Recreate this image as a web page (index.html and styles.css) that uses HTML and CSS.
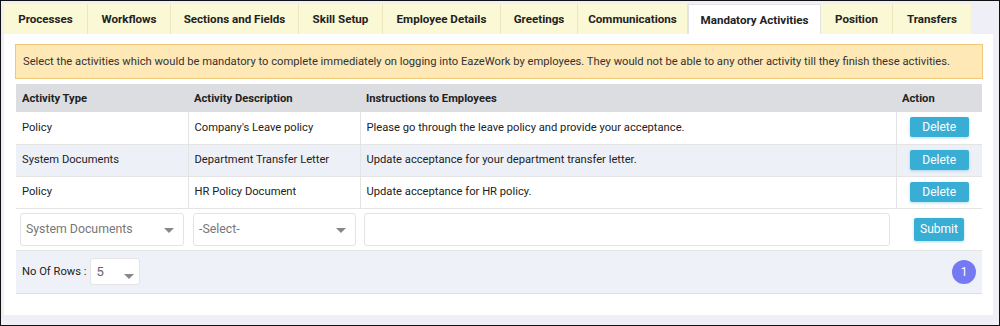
FILE: index.html
```html
<!DOCTYPE html>
<html lang="en">

<head>
    <meta charset="UTF-8">
    <meta name="viewport" content="width=device-width, initial-scale=1.0">
    <title>Mandatory Activities</title>
    <link rel="stylesheet" href="styles.css">
</head>

<body>
    <div class="frame">
        <div class="abas">
            <div class="aba">Processes</div>
            <div class="aba">Workflows</div>
            <div class="aba">Sections and Fields</div>
            <div class="aba">Skill Setup</div>
            <div class="aba">Employee Details</div>
            <div class="aba">Greetings</div>
            <div class="aba">Communications</div>
            <div class="aba ativa">Mandatory Activities</div>
            <div class="aba">Position</div>
            <div class="aba">Transfers</div>
        </div>
        <div class="cartao">
            <div class="aviso">Select the activities which would be mandatory to complete immediately on logging into EazeWork by employees. They would not be able to any other activity till they finish these activities.</div>
            <table class="tabela">
                <thead>
                    <tr>
                        <th class="c1">Activity Type</th>
                        <th class="c2">Activity Description</th>
                        <th class="c3">Instructions to Employees</th>
                        <th class="c4">Action</th>
                    </tr>
                </thead>
                <tbody>
                    <tr>
                        <td>Policy</td>
                        <td>Company's Leave policy</td>
                        <td>Please go through the leave policy and provide your acceptance.</td>
                        <td class="acao"><span class="botao">Delete</span></td>
                    </tr>
                    <tr class="alt">
                        <td>System Documents</td>
                        <td>Department Transfer Letter</td>
                        <td>Update acceptance for your department transfer letter.</td>
                        <td class="acao"><span class="botao">Delete</span></td>
                    </tr>
                    <tr>
                        <td>Policy</td>
                        <td>HR Policy Document</td>
                        <td>Update acceptance for HR policy.</td>
                        <td class="acao"><span class="botao">Delete</span></td>
                    </tr>
                    <tr class="form">
                        <td><div class="campo">System Documents<span class="seta"></span></div></td>
                        <td><div class="campo">-Select-<span class="seta"></span></div></td>
                        <td><div class="campo texto"></div></td>
                        <td class="acao"><span class="botao submit">Submit</span></td>
                    </tr>
                </tbody>
            </table>
            <div class="rodape">
                <div class="linhas">No Of Rows :
                    <div class="campo pequeno">5<span class="seta"></span></div>
                </div>
                <div class="pagina">1</div>
            </div>
        </div>
    </div>
</body>

</html>
```

FILE: styles.css
```css
* {
    box-sizing: border-box;
}

body {
    margin: 0;
    background-color: #ffffff;
    font-family: Roboto, "Liberation Sans", sans-serif;
    color: #222;
}

.frame {
    width: 1000px;
    height: 326px;
    border: 1px solid #111;
    background-color: #eff0f7;
    padding: 3px 6px 0 3px;
    overflow: hidden;
}

.abas {
    display: flex;
    height: 30px;
}

.aba {
    background-color: #fbf8d6;
    border-right: 1px solid #ece7bd;
    font-size: 11.6px;
    font-weight: bold;
    color: #222;
    display: flex;
    align-items: center;
    justify-content: center;
    white-space: nowrap;
}

.aba:nth-child(1) { width: 84px; }
.aba:nth-child(2) { width: 83px; }
.aba:nth-child(3) { width: 128px; }
.aba:nth-child(4) { width: 84px; }
.aba:nth-child(5) { width: 118px; }
.aba:nth-child(6) { width: 77px; }
.aba:nth-child(7) { width: 110px; }
.aba:nth-child(8) { width: 133px; }
.aba:nth-child(9) { width: 72px; }
.aba:nth-child(10) { width: 78px; border-right: 0; }

.aba.ativa {
    background-color: #ffffff;
    border: 1px solid #e4e4e4;
    border-bottom: 0;
}

.cartao {
    background-color: #ffffff;
    height: 281px;
    padding: 10px 10px 0 11px;
}

.aviso {
    background-color: #fde8b6;
    border: 1px solid #efc978;
    font-size: 11.2px;
    color: #333;
    padding: 0 7px;
    height: 35px;
    line-height: 33px;
    white-space: nowrap;
}

.tabela {
    margin: 5px 0 0 1px;
    width: 966px;
    border-collapse: collapse;
    font-size: 11.2px;
}

.tabela th {
    background-color: #dcdde1;
    text-align: left;
    font-weight: bold;
    height: 28px;
    padding: 0 6px;
}

.c1 { width: 172px; }
.c2 { width: 172px; }
.c3 { width: 536px; }

.tabela td {
    height: 32px;
    padding: 0 6px 1px;
    border-left: 1px solid #e4e4e4;
    border-bottom: 1px solid #e4e4e4;
}

.tabela td:first-child {
    border-left: 0;
}

.tabela tr.alt td {
    background-color: #eef0f8;
}

.tabela tr.form td {
    height: 42px;
    padding: 0 4px;
    border-left: 0;
}

.acao {
    text-align: center;
}

.botao {
    display: inline-block;
    background-color: #39aed4;
    color: #ffffff;
    font-size: 12px;
    width: 59px;
    height: 20px;
    line-height: 20px;
    border-radius: 2px;
    box-shadow: 0 1px 3px rgba(57, 174, 212, 0.4);
    text-align: center;
}

.botao.submit {
    width: 50px;
    height: 23px;
    line-height: 23px;
}

.campo {
    position: relative;
    height: 33px;
    border: 1px solid #e4e4e4;
    border-radius: 3px;
    font-size: 12.3px;
    color: #777;
    padding: 0 5px;
    display: flex;
    align-items: center;
}

.tabela tr.form td:nth-child(1) .campo { width: 164px; }
.tabela tr.form td:nth-child(2) .campo { width: 163px; margin-left: 1px; }
.tabela tr.form td:nth-child(3) .campo { width: 526px; }

.seta {
    position: absolute;
    right: 9px;
    top: 14px;
    border-left: 5px solid transparent;
    border-right: 5px solid transparent;
    border-top: 5px solid #888;
}

.rodape {
    margin-left: 1px;
    width: 966px;
    height: 43px;
    background-color: #eff1f8;
    border-bottom: 1px solid #dedfe4;
    display: flex;
    align-items: center;
    justify-content: space-between;
    padding: 0 6px;
}

.linhas {
    display: flex;
    align-items: center;
    font-size: 11.2px;
    color: #222;
}

.campo.pequeno {
    width: 50px;
    height: 27px;
    margin-left: 4px;
    background-color: #ffffff;
    font-size: 13px;
    color: #666;
}

.campo.pequeno .seta {
    top: 15px;
    right: 5px;
}

.pagina {
    width: 24px;
    height: 24px;
    border-radius: 50%;
    background-color: #7579f2;
    color: #ffffff;
    font-size: 12px;
    display: flex;
    align-items: center;
    justify-content: center;
}
```
